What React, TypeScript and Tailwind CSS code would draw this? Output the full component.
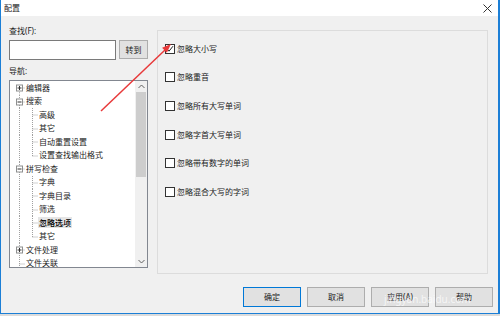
import React from "react";

interface TreeRow {
    label: string;
    level: 0 | 1;
    box?: "+" | "-";
    first?: boolean;
    last?: boolean;
    selected?: boolean;
}

const rows: TreeRow[] = [
    { label: "编辑器", level: 0, box: "+", first: true },
    { label: "搜索", level: 0, box: "-" },
    { label: "高级", level: 1 },
    { label: "其它", level: 1 },
    { label: "自动重置设置", level: 1 },
    { label: "设置查找输出格式", level: 1, last: true },
    { label: "拼写检查", level: 0, box: "-" },
    { label: "字典", level: 1 },
    { label: "字典目录", level: 1 },
    { label: "筛选", level: 1 },
    { label: "忽略选项", level: 1, selected: true },
    { label: "其它", level: 1, last: true },
    { label: "文件处理", level: 0, box: "+" },
    { label: "文件关联", level: 0 },
];

const options = [
    { label: "忽略大小写", checked: true },
    { label: "忽略重音", checked: false },
    { label: "忽略所有大写单词", checked: false },
    { label: "忽略字首大写单词", checked: false },
    { label: "忽略带有数字的单词", checked: false },
    { label: "忽略混合大写的字词", checked: false },
];

const H = 13.5;
const dot = { stroke: "#a0a0a0", strokeWidth: 1, strokeDasharray: "1 1" };

function RootCell({ row }: { row: TreeRow }) {
    return (
        <svg width={15} height={H} className="shrink-0">
            {row.level === 0 ? (
                <>
                    <line x1={9.5} y1={row.first ? H / 2 : 0} x2={9.5} y2={H} {...dot} />
                    <line x1={9.5} y1={7} x2={15} y2={7} {...dot} />
                    {row.box && (
                        <>
                            <rect x={6.5} y={4} width={6} height={6} fill="#fff" stroke="#8e8f8f" />
                            <line x1={7.5} y1={7} x2={11.5} y2={7} stroke="#333" />
                            {row.box === "+" && <line x1={9.5} y1={5} x2={9.5} y2={9} stroke="#333" />}
                        </>
                    )}
                </>
            ) : (
                <line x1={9.5} y1={0} x2={9.5} y2={H} {...dot} />
            )}
        </svg>
    );
}

function ChildCell({ last }: { last?: boolean }) {
    return (
        <svg width={13} height={H} className="shrink-0">
            <line x1={7.5} y1={0} x2={7.5} y2={last ? 7 : H} {...dot} />
            <line x1={7.5} y1={7} x2={13} y2={7} {...dot} />
        </svg>
    );
}

function Chevron({ up }: { up?: boolean }) {
    return (
        <svg width={7} height={5} viewBox="0 0 7 5">
            <polyline
                points={up ? "0.5,4 3.5,1 6.5,4" : "0.5,1 3.5,4 6.5,1"}
                fill="none"
                stroke="#606060"
                strokeWidth={1}
            />
        </svg>
    );
}

function Button({ label, primary }: { label: string; primary?: boolean }) {
    return (
        <div
            className={`w-[58px] h-[20px] flex items-center justify-center bg-[#e1e1e1] border ${
                primary ? "border-[#0078d7]" : "border-[#adadad]"
            }`}
        >
            {label}
        </div>
    );
}

export default function App() {
    return (
        <div className="w-[500px] h-[316px] bg-[#dcdcdc] relative overflow-hidden font-['Noto_Sans','Noto_Sans_CJK_SC',sans-serif] text-[8px] leading-[12px] text-[#1b1b1b]">
            <div className="h-[314px] bg-[#f0f0f0] border-l border-r-2 border-b border-[#1c7fd6] flex flex-col">
                {/* title bar */}
                <div className="h-[16px] bg-white flex items-center justify-between pl-[3px] pr-[6px]">
                    <span>配置</span>
                    <svg width={9} height={9} viewBox="0 0 9 9">
                        <path d="M0.5 0.5 L8.5 8.5 M8.5 0.5 L0.5 8.5" stroke="#333" strokeWidth={1} />
                    </svg>
                </div>

                <div className="flex-1 flex flex-col pl-[8px] pr-[5px] pt-[9px]">
                    <div className="flex gap-[9px]">
                        {/* left column */}
                        <div className="w-[139px] flex flex-col">
                            <div className="h-[12px]">查找(F):</div>
                            <div className="flex gap-[3px] mt-[3px]">
                                <div className="w-[107px] h-[20px] border border-[#7a7a7a] bg-white" />
                                <div className="w-[29px] h-[19px] border border-[#adadad] bg-[#e1e1e1] flex items-center justify-center">
                                    转到
                                </div>
                            </div>
                            <div className="h-[12px] mt-[5px]">导航:</div>
                            <div className="mt-[3px] h-[188px] border border-[#828790] bg-white flex overflow-hidden">
                                <div className="flex-1 overflow-hidden">
                                    {rows.map((row, i) => (
                                        <div key={i} className="flex items-center h-[13.5px] whitespace-nowrap">
                                            <RootCell row={row} />
                                            {row.level === 1 && <ChildCell last={row.last} />}
                                            {row.selected ? (
                                                <span className="h-[11px] leading-[11px] px-[1px] bg-[#e5e5e5] text-black font-medium">
                                                    {row.label}
                                                </span>
                                            ) : (
                                                <span className="ml-[1px]">{row.label}</span>
                                            )}
                                        </div>
                                    ))}
                                </div>
                                <div className="w-[12px] flex flex-col bg-[#f0f0f0]">
                                    <div className="h-[11px] flex items-center justify-center">
                                        <Chevron up />
                                    </div>
                                    <div className="h-[85px] mx-[1px] bg-[#cdcdcd]" />
                                    <div className="flex-1" />
                                    <div className="h-[11px] flex items-center justify-center">
                                        <Chevron />
                                    </div>
                                </div>
                            </div>
                        </div>

                        {/* options panel */}
                        <div className="mt-[5px] w-[331px] h-[244px] border border-[#dcdcdc] pt-[3.5px] pl-[7px] flex flex-col">
                            {options.map((opt) => (
                                <div key={opt.label} className="h-[28.6px] flex items-center gap-[2px]">
                                    <div className="w-[10px] h-[10px] border border-[#333] bg-white flex items-center justify-center">
                                        {opt.checked && (
                                            <svg width={8} height={8} viewBox="0 0 8 8">
                                                <polyline points="1,4 3,6.2 7,1.2" fill="none" stroke="#222" strokeWidth={1} />
                                            </svg>
                                        )}
                                    </div>
                                    <span>{opt.label}</span>
                                </div>
                            ))}
                        </div>
                    </div>

                    {/* buttons */}
                    <div className="mt-[13px] flex justify-end gap-[6px]">
                        <Button label="确定" primary />
                        <Button label="取消" />
                        <Button label="应用(A)" />
                        <Button label="帮助" />
                    </div>
                </div>
            </div>

            {/* red annotation arrow */}
            <svg className="absolute left-0 top-0 pointer-events-none" width={500} height={316}>
                <line x1={101} y1={111} x2={165} y2={50} stroke="#e8393a" strokeWidth={1.5} />
                <polygon points="171,44 166.9,52.7 162.1,47.7" fill="#e8393a" />
            </svg>

            {/* watermark */}
            <div className="absolute left-[384px] top-[293px] text-[10px] leading-[12px] text-white/70 font-['Noto_Sans',sans-serif] pointer-events-none">
                jingyan.baidu.com
            </div>
        </div>
    );
}
